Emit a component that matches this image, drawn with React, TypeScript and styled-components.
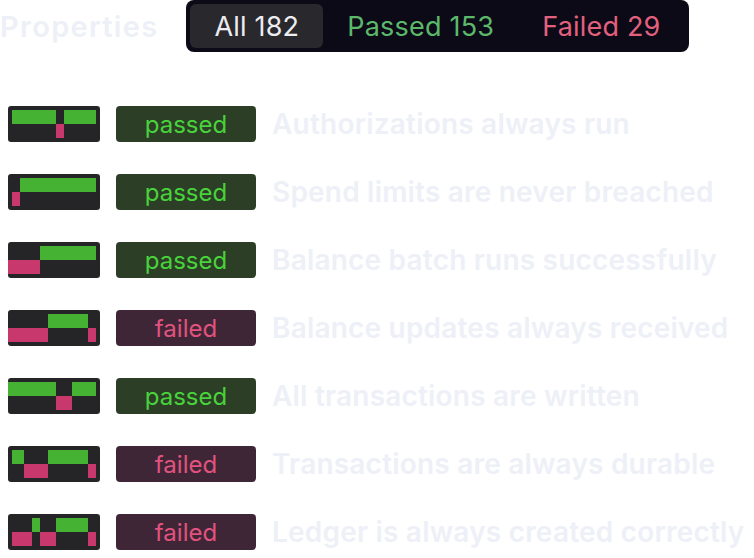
import styled, { createGlobalStyle } from 'styled-components';

const GlobalStyle = createGlobalStyle`
  html, body {
    margin: 0;
    padding: 0;
    background: #ffffff;
  }
  body {
    font-family: Inter, 'Noto Sans', 'Liberation Sans', sans-serif;
  }
`;

type Lane = 'top' | 'bottom';
type Segment = { from: number; to: number; lane: Lane };
type Property = { name: string; passed: boolean; timeline: Segment[] };

const properties: Property[] = [
  {
    name: 'Authorizations always run',
    passed: true,
    timeline: [
      { from: 4, to: 48, lane: 'top' },
      { from: 48, to: 56, lane: 'bottom' },
      { from: 56, to: 88, lane: 'top' },
    ],
  },
  {
    name: 'Spend limits are never breached',
    passed: true,
    timeline: [
      { from: 4, to: 12, lane: 'bottom' },
      { from: 12, to: 88, lane: 'top' },
    ],
  },
  {
    name: 'Balance batch runs successfully',
    passed: true,
    timeline: [
      { from: 0, to: 32, lane: 'bottom' },
      { from: 32, to: 88, lane: 'top' },
    ],
  },
  {
    name: 'Balance updates always received',
    passed: false,
    timeline: [
      { from: 0, to: 40, lane: 'bottom' },
      { from: 40, to: 80, lane: 'top' },
      { from: 80, to: 88, lane: 'bottom' },
    ],
  },
  {
    name: 'All transactions are written',
    passed: true,
    timeline: [
      { from: 0, to: 48, lane: 'top' },
      { from: 48, to: 64, lane: 'bottom' },
      { from: 64, to: 88, lane: 'top' },
    ],
  },
  {
    name: 'Transactions are always durable',
    passed: false,
    timeline: [
      { from: 4, to: 16, lane: 'top' },
      { from: 16, to: 40, lane: 'bottom' },
      { from: 40, to: 80, lane: 'top' },
      { from: 80, to: 88, lane: 'bottom' },
    ],
  },
  {
    name: 'Ledger is always created correctly',
    passed: false,
    timeline: [
      { from: 4, to: 24, lane: 'bottom' },
      { from: 24, to: 32, lane: 'top' },
      { from: 32, to: 48, lane: 'bottom' },
      { from: 48, to: 80, lane: 'top' },
      { from: 80, to: 88, lane: 'bottom' },
    ],
  },
];

const Page = styled.div`
  width: 754px;
  height: 558px;
  overflow: hidden;
`;

const Header = styled.div`
  display: flex;
  align-items: center;
  gap: 28px;
  height: 52px;
`;

const Title = styled.h2`
  margin: 0;
  min-width: 158px;
  font-size: 29px;
  font-weight: 600;
  color: #eef0f7;
  letter-spacing: 1.3px;
`;

const Tabs = styled.div`
  display: flex;
  align-items: center;
  height: 52px;
  box-sizing: border-box;
  padding: 4px;
  background: #0b0a16;
  border-radius: 8px;
`;

const Tab = styled.div<{ $tone: 'all' | 'pass' | 'fail'; $active?: boolean }>`
  display: flex;
  align-items: center;
  height: 44px;
  padding: 0 24px;
  border-radius: 6px;
  font-size: 27px;
  font-weight: 400;
  letter-spacing: 0.2px;
  background: ${(p) => (p.$active ? '#28282d' : 'transparent')};
  color: ${(p) =>
    p.$tone === 'pass' ? '#5cb86b' : p.$tone === 'fail' ? '#e2617f' : '#ececf1'};
`;

const List = styled.div`
  display: flex;
  flex-direction: column;
  gap: 32px;
  padding: 54px 0 0 8px;
`;

const Row = styled.div`
  display: flex;
  align-items: center;
  height: 36px;
`;

const Badge = styled.div<{ $passed: boolean }>`
  display: flex;
  align-items: center;
  justify-content: center;
  width: 140px;
  height: 36px;
  margin: 0 16px;
  border-radius: 4px;
  font-size: 24px;
  background: ${(p) => (p.$passed ? '#2d3e27' : '#3e2636')};
  color: ${(p) => (p.$passed ? '#48d33b' : '#e2527f')};
`;

const Name = styled.span`
  font-size: 28px;
  font-weight: 600;
  color: #eef0f7;
  white-space: nowrap;
  letter-spacing: 0.2px;
`;

const Timeline = ({ segments }: { segments: Segment[] }) => (
  <svg width="92" height="36" viewBox="0 0 92 36">
    <rect width="92" height="36" rx="3" fill="#252528" />
    {segments.map((s, i) => (
      <rect
        key={i}
        x={s.from}
        y={s.lane === 'top' ? 4 : 18}
        width={s.to - s.from}
        height={14}
        fill={s.lane === 'top' ? '#45b233' : '#c9386d'}
      />
    ))}
  </svg>
);

export default function App() {
  return (
    <Page>
      <GlobalStyle />
      <Header>
        <Title>Properties</Title>
        <Tabs>
          <Tab $tone="all" $active>
            All 182
          </Tab>
          <Tab $tone="pass">Passed 153</Tab>
          <Tab $tone="fail">Failed 29</Tab>
        </Tabs>
      </Header>
      <List>
        {properties.map((p) => (
          <Row key={p.name}>
            <Timeline segments={p.timeline} />
            <Badge $passed={p.passed}>{p.passed ? 'passed' : 'failed'}</Badge>
            <Name>{p.name}</Name>
          </Row>
        ))}
      </List>
    </Page>
  );
}
